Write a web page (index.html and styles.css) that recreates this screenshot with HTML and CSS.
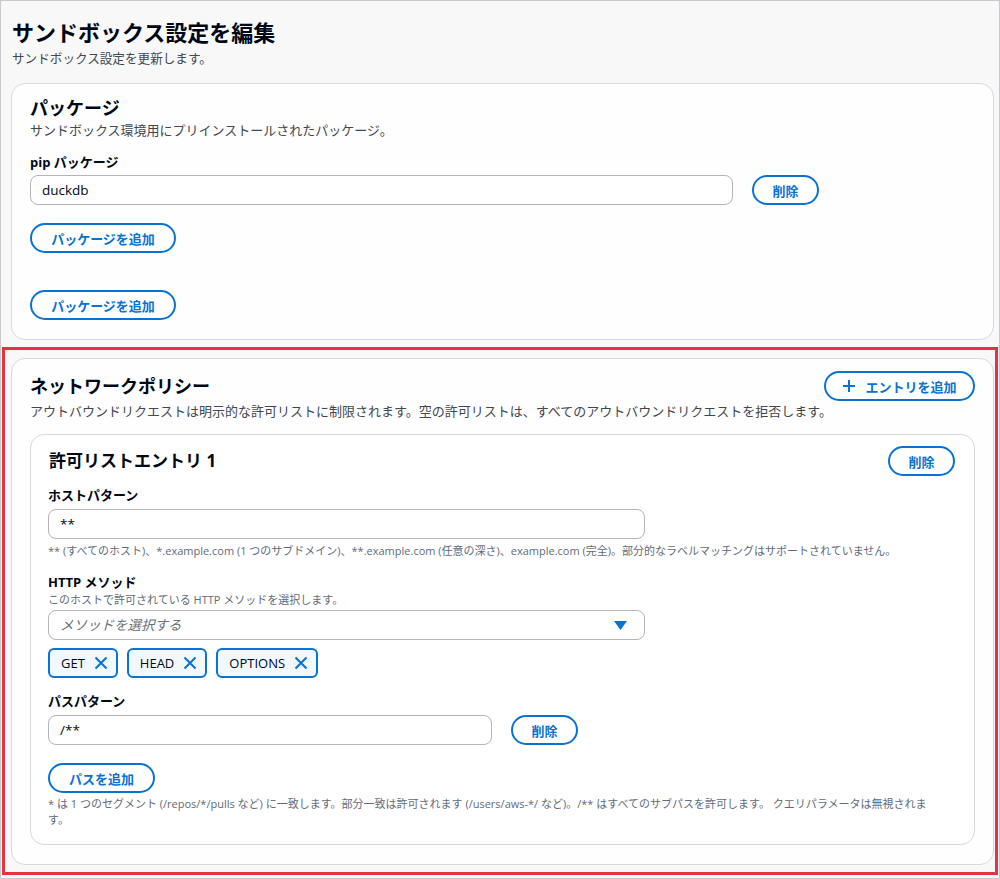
FILE: index.html
```html
<!DOCTYPE html>
<html lang="ja">
<head>
    <meta charset="UTF-8">
    <title>サンドボックス設定を編集</title>
    <link rel="stylesheet" href="styles.css">
</head>
<body>
    <div class="page">
        <h1 class="page-title">サンドボックス設定を編集</h1>
        <p class="page-desc">サンドボックス設定を更新します。</p>

        <!-- Packages -->
        <section class="card">
            <h2 class="card-title">パッケージ</h2>
            <p class="card-desc">サンドボックス環境用にプリインストールされたパッケージ。</p>
            <label class="field-label">pip パッケージ</label>
            <div class="row">
                <div class="input input-pkg">duckdb</div>
                <button class="btn btn-small">削除</button>
            </div>
            <button class="btn btn-add-pkg">パッケージを追加</button>
            <button class="btn btn-add-pkg second">パッケージを追加</button>
        </section>

        <!-- Network policy -->
        <div class="highlight">
            <section class="card">
                <div class="card-header">
                    <h2 class="card-title">ネットワークポリシー</h2>
                    <button class="btn btn-entry">
                        <svg width="14" height="14" viewBox="0 0 14 14"><path d="M7 1v12M1 7h12" stroke="#0972d3" stroke-width="2" fill="none"/></svg>
                        エントリを追加
                    </button>
                </div>
                <p class="card-desc">アウトバウンドリクエストは明示的な許可リストに制限されます。空の許可リストは、すべてのアウトバウンドリクエストを拒否します。</p>

                <div class="entry">
                    <div class="card-header">
                        <h3 class="entry-title">許可リストエントリ 1</h3>
                        <button class="btn btn-small">削除</button>
                    </div>

                    <label class="field-label first">ホストパターン</label>
                    <div class="input input-wide">**</div>
                    <p class="help">** (すべてのホスト)、*.example.com (1 つのサブドメイン)、**.example.com (任意の深さ)、example.com (完全)。部分的なラベルマッチングはサポートされていません。</p>

                    <label class="field-label">HTTP メソッド</label>
                    <p class="field-desc">このホストで許可されている HTTP メソッドを選択します。</p>
                    <div class="input input-wide select">
                        <span class="placeholder">メソッドを選択する</span>
                        <svg width="13" height="9" viewBox="0 0 13 9"><path d="M0 0h13L6.5 9z" fill="#0972d3"/></svg>
                    </div>
                    <div class="tokens">
                        <div class="token">GET <svg width="14" height="14" viewBox="0 0 14 14"><path d="M1.5 1.5l11 11M12.5 1.5l-11 11" stroke="#0972d3" stroke-width="2" fill="none"/></svg></div>
                        <div class="token">HEAD <svg width="14" height="14" viewBox="0 0 14 14"><path d="M1.5 1.5l11 11M12.5 1.5l-11 11" stroke="#0972d3" stroke-width="2" fill="none"/></svg></div>
                        <div class="token">OPTIONS <svg width="14" height="14" viewBox="0 0 14 14"><path d="M1.5 1.5l11 11M12.5 1.5l-11 11" stroke="#0972d3" stroke-width="2" fill="none"/></svg></div>
                    </div>

                    <label class="field-label path-label">パスパターン</label>
                    <div class="row">
                        <div class="input input-path">/**</div>
                        <button class="btn btn-small">削除</button>
                    </div>
                    <button class="btn btn-add-path">パスを追加</button>
                    <p class="help path-help">* は 1 つのセグメント (/repos/*/pulls など) に一致します。部分一致は許可されます (/users/aws-*/ など)。/** はすべてのサブパスを許可します。 クエリパラメータは無視されます。</p>
                </div>
            </section>
        </div>
    </div>
</body>
</html>
```

FILE: styles.css
```css
* {
    box-sizing: border-box;
}

body {
    margin: 0;
    font-family: 'Open Sans', 'Noto Sans CJK JP', sans-serif;
    color: #000716;
    background: #fff;
}

.page {
    width: 1000px;
    height: 879px;
    border: 1px solid #c9c9cc;
    background: #f8f8f8;
    padding: 17px 5px 0 10px;
    overflow: hidden;
}

.page-title {
    font-size: 22px;
    line-height: 28px;
    font-weight: bold;
    margin: 0 0 0 1px;
}

.page-desc {
    font-size: 12.6px;
    line-height: 18px;
    color: #414750;
    margin: 4px 0 15px 1px;
}

/* Cards */
.card {
    background: #fefefe;
    border: 1px solid #d8d8db;
    border-radius: 14px;
    padding: 12px 18px 19px 18px;
}

.card-header {
    display: flex;
    justify-content: space-between;
    align-items: center;
}

.card-title {
    font-size: 18px;
    line-height: 24px;
    font-weight: bold;
    margin: 0;
}

.card-desc {
    font-size: 13px;
    line-height: 20px;
    color: #414750;
    margin: 0;
}

.field-label {
    display: block;
    font-size: 13px;
    line-height: 20px;
    font-weight: bold;
    margin-top: 12px;
    margin-bottom: 3px;
}

.field-label.first {
    margin-top: 9px;
    margin-bottom: 4px;
}

.field-desc {
    font-size: 11px;
    line-height: 16px;
    color: #5f6b7a;
    margin: -3px 0 2px 0;
}

.row {
    display: flex;
    align-items: center;
    gap: 19px;
}

/* Inputs */
.input {
    height: 30px;
    border: 1px solid #b4b4bb;
    border-radius: 8px;
    background: #fff;
    padding: 0 11px;
    font-size: 13.5px;
    line-height: 28px;
    color: #000716;
}

.input-pkg {
    width: 703px;
}

.input-wide {
    width: 597px;
}

.input-path {
    width: 444px;
}

.select {
    display: flex;
    justify-content: space-between;
    align-items: center;
}

.select svg {
    margin-right: 6px;
}

.placeholder {
    font-style: italic;
    color: #687078;
}

.help {
    font-size: 11px;
    line-height: 18px;
    color: #5f6b7a;
    margin: 3px 0 0 0;
}

.path-help {
    line-height: 16px;
    margin-top: 3px;
    max-width: 898px;
}

/* Buttons */
.btn {
    font-family: inherit;
    font-size: 13px;
    font-weight: bold;
    color: #0972d3;
    background: #fff;
    border: 2px solid #0972d3;
    border-radius: 20px;
    height: 30px;
    padding: 0 18px;
    cursor: pointer;
    display: flex;
    align-items: center;
    justify-content: center;
}

.btn-small {
    width: 67px;
}

.btn-add-pkg {
    width: 146px;
    margin-top: 18px;
}

.btn-add-pkg.second {
    margin-top: 37px;
}

.btn-entry {
    width: 151px;
    gap: 9px;
    padding: 0 12px;
}

.btn-add-path {
    width: 107px;
    margin-top: 18px;
}

/* Highlighted network section */
.highlight {
    margin: 7px -4px 0 -9px;
    border: 3px solid #e8333f;
    padding: 8px 1px 7px 6px;
    background: #f8f8f8;
}

.highlight .card-desc {
    margin-bottom: 13px;
}

.entry {
    border: 1px solid #d8d8db;
    border-radius: 14px;
    background: #fff;
    padding: 11px 19px 16px 17px;
}

.entry-title {
    font-size: 17px;
    line-height: 24px;
    font-weight: bold;
    margin: 0 0 0 1px;
}

/* Tokens */
.tokens {
    display: flex;
    gap: 9px;
    margin-top: 8px;
}

.token {
    height: 30px;
    display: flex;
    align-items: center;
    gap: 9px;
    padding: 0 8px 0 11px;
    border: 2px solid #0972d3;
    border-radius: 6px;
    background: #f1f8ff;
    font-size: 13px;
}

.path-label {
    margin-top: 13px;
    margin-bottom: 4px;
}
```
